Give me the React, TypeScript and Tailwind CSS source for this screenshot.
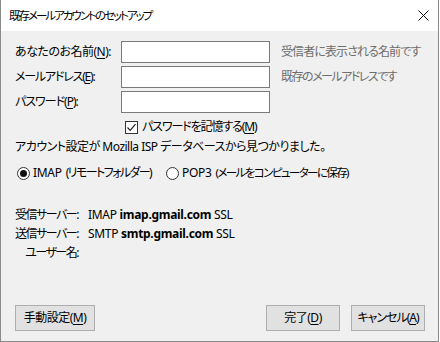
import React from "react";

const U = ({ c }: { c: string }) => <span className="underline underline-offset-2">{c}</span>;

function Input() {
  return <div className="w-[149px] h-[22px] bg-white border border-[#7a7a7a] shrink-0" />;
}

function Btn({ children, w }: { children: React.ReactNode; w: string }) {
  return (
    <div className={`${w} h-[26px] bg-[#e1e1e1] border border-[#adadad] flex items-center justify-center text-[12px] text-black whitespace-nowrap`}>
      {children}
    </div>
  );
}

export default function App() {
  return (
    <div
      className="w-[439px] h-[342px] border-l border-r border-b border-[#8a8a8a] flex flex-col text-[12px] text-black tracking-[-0.5px] whitespace-nowrap [font-feature-settings:'palt']"
      style={{ fontFamily: '"Noto Sans", "Noto Sans CJK JP", sans-serif' }}
    >
      <div className="h-[31px] bg-white flex items-center pl-[8px] pr-[8px] shrink-0">
        <span className="text-[11.5px] leading-[16px] tracking-[-2px]">既存メールアカウントのセットアップ</span>
        <svg className="ml-auto mr-[1px]" width="11" height="11" viewBox="0 0 11 11">
          <path d="M0.5 0.5 L10.5 10.5 M10.5 0.5 L0.5 10.5" stroke="#111" strokeWidth="1" />
        </svg>
      </div>
      <div className="flex-1 bg-[#f0f0f0] flex flex-col pl-[14px] pr-[13px] pt-[10px] pb-[10px]">
        <div className="flex flex-col gap-[3px]">
          <div className="flex items-center h-[22px]">
            <div className="w-[106px] shrink-0 leading-[16px]">あなたのお名前(<U c="N" />):</div>
            <Input />
            <div className="ml-[11px] text-[#6d6d6d] leading-[16px] tracking-[-0.9px]">受信者に表示される名前です</div>
          </div>
          <div className="flex items-center h-[22px]">
            <div className="w-[106px] shrink-0 leading-[16px] tracking-[-1.2px]">メールアドレス(<U c="E" />):</div>
            <Input />
            <div className="ml-[11px] text-[#6d6d6d] leading-[16px] tracking-[-1.5px]">既存のメールアドレスです</div>
          </div>
          <div className="flex items-center h-[22px]">
            <div className="w-[106px] shrink-0 leading-[16px] tracking-[-1px]">パスワード(<U c="P" />):</div>
            <Input />
          </div>
        </div>
        <div className="flex items-center h-[16px] mt-[6px] pl-[110px]">
          <div className="w-[13px] h-[13px] shrink-0 bg-white border border-[#333] flex items-center justify-center">
            <svg width="11" height="11" viewBox="0 0 11 11">
              <path d="M1.5 5.5 L4.2 8.3 L9.5 2.2" fill="none" stroke="#222" strokeWidth="1.2" />
            </svg>
          </div>
          <span className="ml-[4px] leading-[16px] tracking-[-1.1px]">パスワードを記憶する(<U c="M" />)</span>
        </div>
        <div className="mt-[4px] h-[16px] leading-[16px]">アカウント設定が Mozilla ISP データベースから見つかりました。</div>
        <div className="mt-[10px] h-[16px] flex items-center pl-[2px]">
          <div className="w-[13px] h-[13px] shrink-0 rounded-full border border-[#333] bg-white flex items-center justify-center">
            <div className="w-[7px] h-[7px] rounded-full bg-[#111]" />
          </div>
          <span className="ml-[3px] leading-[16px] tracking-[-0.3px]">IMAP</span>
          <span className="ml-[4px] leading-[16px] tracking-[-1.6px]">(リモートフォルダー)</span>
          <div className="ml-[15px] w-[13px] h-[13px] shrink-0 rounded-full border border-[#333] bg-white" />
          <span className="ml-[3px] leading-[16px] tracking-[-0.3px]">POP3</span>
          <span className="ml-[4px] leading-[16px] text-[11.5px] tracking-[-1.6px]">(メールをコンピューターに保存)</span>
        </div>
        <div className="mt-[24px] flex flex-col">
          <div className="h-[19px] flex items-center">
            <div className="w-[63px] shrink-0 text-right tracking-[-1.5px]">受信サーバー:</div>
            <div className="ml-[10px] tracking-[-0.3px]">IMAP <b>imap.gmail.com</b> SSL</div>
          </div>
          <div className="h-[19px] flex items-center">
            <div className="w-[63px] shrink-0 text-right tracking-[-1.5px]">送信サーバー:</div>
            <div className="ml-[10px] tracking-[-0.3px]">SMTP <b>smtp.gmail.com</b> SSL</div>
          </div>
          <div className="h-[19px] flex items-center">
            <div className="w-[63px] shrink-0 text-right tracking-[-1.5px]">ユーザー名:</div>
          </div>
        </div>
        <div className="mt-auto flex items-center">
          <Btn w="w-[80px]">手動設定(<U c="M" />)</Btn>
          <div className="ml-auto flex gap-[11px]">
            <Btn w="w-[74px]">完了(<U c="D" />)</Btn>
            <Btn w="w-[74px]"><span className="tracking-[-1px]">キャンセル(<U c="A" />)</span></Btn>
          </div>
        </div>
      </div>
    </div>
  );
}
